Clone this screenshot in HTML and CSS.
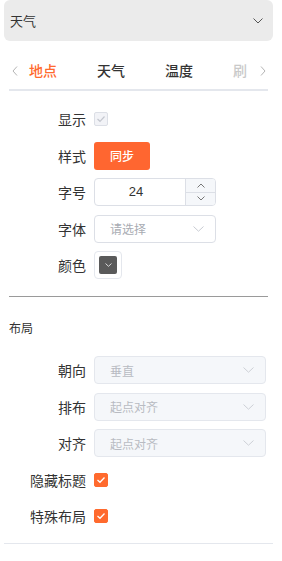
FILE: index.html
```html
<!DOCTYPE html>
<html lang="zh">
<head>
<meta charset="utf-8">
<link rel="stylesheet" href="styles.css">
</head>
<body>
<div class="panel">
  <div class="top-select">
    <span>天气</span>
    <svg class="chev" width="10" height="6" viewBox="0 0 10 6"><path d="M0.5 0.5 L5 5 L9.5 0.5" fill="none" stroke="#555" stroke-width="1"/></svg>
  </div>

  <div class="tabs">
    <svg class="nav nav-prev" width="6" height="10" viewBox="0 0 6 10"><path d="M5 0.5 L1 5 L5 9.5" fill="none" stroke="#b4b4b4" stroke-width="1"/></svg>
    <div class="tab-scroll">
      <div class="tab active">地点</div>
      <div class="tab">天气</div>
      <div class="tab">温度</div>
      <div class="tab faded">刷</div>
    </div>
    <svg class="nav nav-next" width="6" height="10" viewBox="0 0 6 10"><path d="M1 0.5 L5 5 L1 9.5" fill="none" stroke="#b4b4b4" stroke-width="1"/></svg>
  </div>

  <div class="form">
    <div class="row">
      <label class="lbl">显示</label>
      <span class="check disabled">
        <svg width="10" height="8" viewBox="0 0 10 8"><path d="M1.5 4 L4 6.3 L8.5 1.5" fill="none" stroke="#c4c7cf" stroke-width="1.2"/></svg>
      </span>
    </div>
    <div class="row">
      <label class="lbl">样式</label>
      <button class="btn">同步</button>
    </div>
    <div class="row">
      <label class="lbl">字号</label>
      <div class="num">
        <span class="num-val">24</span>
        <div class="spin">
          <div class="spin-btn"><svg width="8" height="5" viewBox="0 0 8 5"><path d="M0.5 4.5 L4 1 L7.5 4.5" fill="none" stroke="#777" stroke-width="1"/></svg></div>
          <div class="spin-btn"><svg width="8" height="5" viewBox="0 0 8 5"><path d="M0.5 0.5 L4 4 L7.5 0.5" fill="none" stroke="#777" stroke-width="1"/></svg></div>
        </div>
      </div>
    </div>
    <div class="row">
      <label class="lbl">字体</label>
      <div class="sel sel-short">
        <span class="ph">请选择</span>
        <svg width="11" height="6" viewBox="0 0 11 6"><path d="M0.5 0.5 L5.5 5.2 L10.5 0.5" fill="none" stroke="#c8cbd2" stroke-width="1"/></svg>
      </div>
    </div>
    <div class="row">
      <label class="lbl">颜色</label>
      <div class="color">
        <span class="swatch">
          <svg width="7" height="4" viewBox="0 0 7 4"><path d="M0.5 0.5 L3.5 3.3 L6.5 0.5" fill="none" stroke="#e8e8e8" stroke-width="0.9"/></svg>
        </span>
      </div>
    </div>
  </div>

  <hr class="divider">

  <div class="heading">布局</div>

  <div class="form form2">
    <div class="row">
      <label class="lbl">朝向</label>
      <div class="sel sel-wide disabled">
        <span class="ph">垂直</span>
        <svg width="11" height="6" viewBox="0 0 11 6"><path d="M0.5 0.5 L5.5 5.2 L10.5 0.5" fill="none" stroke="#cdd0d6" stroke-width="1"/></svg>
      </div>
    </div>
    <div class="row">
      <label class="lbl">排布</label>
      <div class="sel sel-wide disabled">
        <span class="ph">起点对齐</span>
        <svg width="11" height="6" viewBox="0 0 11 6"><path d="M0.5 0.5 L5.5 5.2 L10.5 0.5" fill="none" stroke="#cdd0d6" stroke-width="1"/></svg>
      </div>
    </div>
    <div class="row">
      <label class="lbl">对齐</label>
      <div class="sel sel-wide disabled">
        <span class="ph">起点对齐</span>
        <svg width="11" height="6" viewBox="0 0 11 6"><path d="M0.5 0.5 L5.5 5.2 L10.5 0.5" fill="none" stroke="#cdd0d6" stroke-width="1"/></svg>
      </div>
    </div>
    <div class="row">
      <label class="lbl">隐藏标题</label>
      <span class="check checked">
        <svg width="10" height="8" viewBox="0 0 10 8"><path d="M1.5 4 L4 6.3 L8.5 1.5" fill="none" stroke="#fff" stroke-width="1.3"/></svg>
      </span>
    </div>
    <div class="row">
      <label class="lbl">特殊布局</label>
      <span class="check checked">
        <svg width="10" height="8" viewBox="0 0 10 8"><path d="M1.5 4 L4 6.3 L8.5 1.5" fill="none" stroke="#fff" stroke-width="1.3"/></svg>
      </span>
    </div>
  </div>

  <hr class="bottom-line">
</div>
</body>
</html>
```

FILE: styles.css
```css
* { box-sizing: border-box; }

body {
  margin: 0;
  background: #fff;
  font-family: "Noto Sans CJK SC", "Noto Sans", sans-serif;
  color: #333;
}

.panel {
  width: 282px;
}

.top-select {
  margin: 0 9px 0 4px;
  height: 41px;
  background: #ebebeb;
  border-radius: 6px;
  padding: 0 10px 0 6px;
  display: flex;
  align-items: center;
  justify-content: space-between;
  font-size: 13px;
  color: #333;
}

.tabs {
  position: relative;
  margin: 11px 14px 0 9px;
  height: 39px;
  border-bottom: 2px solid #e4e7ed;
}

.tab-scroll {
  display: flex;
  overflow: hidden;
  margin-right: 20px;
  height: 37px;
}

.tab {
  flex: 0 0 68px;
  text-align: center;
  line-height: 37px;
  font-size: 14px;
  font-weight: 500;
  color: #333;
  white-space: nowrap;
}

.tab.active { color: #ff6a2e; }
.tab.faded { flex: 0 0 auto; color: #c9c9c9; text-align: left; padding-left: 20px; }

.nav {
  position: absolute;
  top: 14px;
}
.nav-prev { left: 3px; }
.nav-next { right: 2px; }

.form {
  padding: 14px 16px 0 0;
  display: flex;
  flex-direction: column;
  gap: 8.5px;
}

.form2 { padding-top: 0; }

.row {
  display: flex;
  align-items: center;
  height: 28px;
  gap: 8px;
}

.lbl {
  width: 86px;
  text-align: right;
  font-size: 14px;
  color: #333;
  flex: 0 0 86px;
}

.check {
  width: 14px;
  height: 14px;
  border-radius: 2px;
  display: flex;
  align-items: center;
  justify-content: center;
}
.check.disabled {
  background: #f2f3f7;
  border: 1px solid #dcdfe6;
}
.check.checked {
  background: #ff6a2e;
  border: 1px solid #ff6a2e;
}

.btn {
  width: 56px;
  height: 28px;
  border: none;
  border-radius: 3px;
  background: #ff6630;
  color: #fff;
  font-family: inherit;
  font-size: 12px;
  font-weight: 500;
  padding: 0;
}

.num {
  width: 122px;
  height: 28px;
  border: 1px solid #dcdfe6;
  border-radius: 4px;
  display: flex;
  overflow: hidden;
}
.num-val {
  flex: 1;
  text-align: center;
  padding-right: 8px;
  font-family: "Liberation Sans", Arial, sans-serif;
  font-size: 13px;
  line-height: 26px;
  color: #333;
}
.spin {
  width: 30px;
  border-left: 1px solid #dcdfe6;
  display: flex;
  flex-direction: column;
  background: #f5f7fa;
}
.spin-btn {
  flex: 1;
  display: flex;
  align-items: center;
  justify-content: center;
}
.spin-btn + .spin-btn { border-top: 1px solid #dcdfe6; }

.sel {
  height: 28px;
  border: 1px solid #dcdfe6;
  border-radius: 4px;
  background: #fff;
  display: flex;
  align-items: center;
  justify-content: space-between;
  padding: 0 11px 0 15px;
  font-size: 12px;
}
.sel-short { width: 122px; }
.sel-wide { flex: 1; }
.sel .ph { color: #a8abb2; }
.sel.disabled {
  background: #f5f7fa;
  border-color: #e4e7ed;
}
.sel.disabled .ph { color: #b8bbc2; }

.color {
  width: 28px;
  height: 28px;
  border: 1px solid #e4e7ed;
  border-radius: 4px;
  display: flex;
  align-items: center;
  justify-content: center;
}
.swatch {
  width: 18px;
  height: 18px;
  background: #5a5a5a;
  border-radius: 2px;
  display: flex;
  align-items: center;
  justify-content: center;
}

.divider {
  margin: 17px 14px 0 9px;
  border: none;
  border-top: 1px solid #9a9a9a;
  height: 0;
}

.heading {
  margin: 23px 0 20px 9px;
  font-size: 12px;
  line-height: 16px;
  color: #333;
}

.bottom-line {
  margin: 13px 9px 0 4px;
  border: none;
  border-top: 1px solid #e4e7ed;
  height: 0;
}
```
